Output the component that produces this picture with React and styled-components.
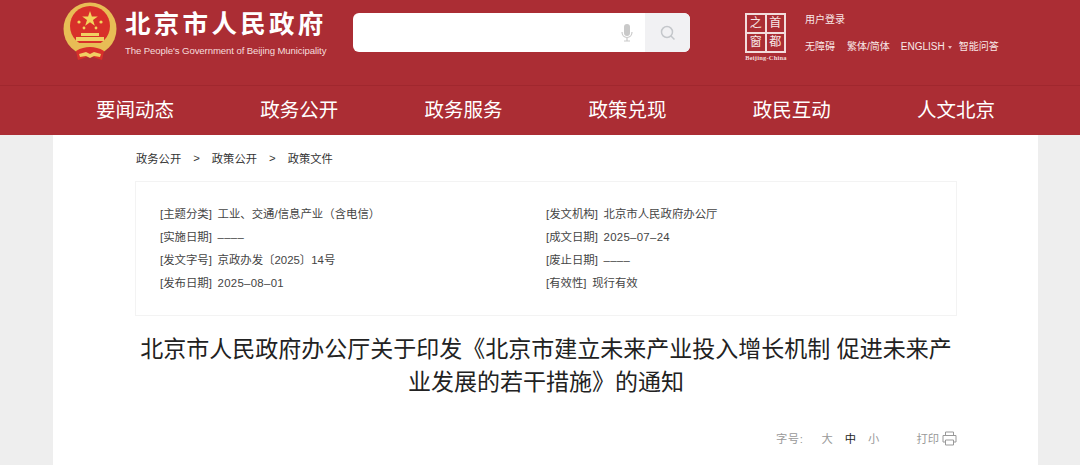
import React from "react"
import styled, { createGlobalStyle } from "styled-components"

const Global = createGlobalStyle`
    * { box-sizing: border-box; }
    html, body {
        margin: 0;
        height: 465px;
        overflow: hidden;
        background: #eeeeee;
        font-family: "Liberation Sans", "Noto Sans CJK SC", sans-serif;
    }
`

const Top = styled.header`
    height: 86px;
    background: #ab2d34;
    display: flex;
    align-items: flex-start;
    padding-left: 62px;
    border-bottom: 1px solid #a0272e;
`
const Emblem = styled.svg`
    width: 56px;
    height: 60px;
    margin-top: 2px;
    flex: none;
`
const Logo = styled.div`
    margin-left: 7px;
    width: 228px;
    flex: none;
    color: #fff;
`
const LogoTitle = styled.h1`
    margin: 9px 0 0;
    font-size: 25.5px;
    line-height: 30px;
    font-weight: 700;
    letter-spacing: 3.3px;
    white-space: nowrap;
`
const LogoSub = styled.div`
    margin-top: 5px;
    font-size: 9.6px;
    line-height: 14px;
    letter-spacing: -0.1px;
    white-space: nowrap;
    color: #f6dcdc;
`
const Search = styled.div`
    margin-top: 13px;
    width: 337px;
    height: 39px;
    flex: none;
    display: flex;
    background: #fff;
    border-radius: 6px;
    overflow: hidden;
`
const SearchInput = styled.div`
    flex: 1;
    display: flex;
    align-items: center;
    justify-content: flex-end;
    padding-right: 12px;
`
const SearchButton = styled.div`
    width: 45px;
    background: #f1f1f3;
    display: flex;
    align-items: center;
    justify-content: center;
`
const Stamp = styled.div`
    margin-left: 54px;
    margin-top: 13px;
    width: 44px;
    flex: none;
    color: #fff;
`
const StampBox = styled.div`
    width: 41px;
    height: 40px;
    margin-left: 1px;
    border: 2px solid #f3dcdc;
    display: grid;
    grid-template-columns: 1fr 1fr;
    grid-template-rows: 1fr 1fr;
    gap: 2px;
    background: #f3dcdc;
`
const StampCell = styled.span`
    background: #ab2d34;
    font-family: "Liberation Serif", "Noto Sans CJK SC", serif;
    font-size: 12px;
    line-height: 17px;
    text-align: center;
    color: #f7e6e6;
`
const StampCaption = styled.div`
    margin-top: 1px;
    font-family: "Liberation Serif", serif;
    font-size: 6.5px;
    line-height: 7px;
    font-weight: 700;
    letter-spacing: 0.2px;
    white-space: nowrap;
    text-align: center;
    color: #f3dcdc;
`
const Links = styled.div`
    margin-left: 17px;
    color: #f9e8e8;
    font-size: 10px;
    line-height: 14px;
`
const Login = styled.div`
    margin-top: 13px;
`
const LinkRow = styled.div`
    margin-top: 13px;
    display: flex;
    gap: 12px;
    white-space: nowrap;
`
const English = styled.span`
    margin-left: -1px;
    margin-right: -5px;
    &::after {
        content: "";
        display: inline-block;
        margin-left: 3px;
        vertical-align: 1px;
        border: 2.5px solid transparent;
        border-top: 3px solid #e9b9bb;
        border-bottom: 0;
    }
`
const Nav = styled.nav`
    height: 49px;
    background: #ab2d34;
    display: flex;
    padding-left: 96px;
    gap: 86.2px;
    align-items: center;
`
const NavItem = styled.a`
    width: 78px;
    color: #fff;
    font-size: 19.5px;
    line-height: 49px;
    white-space: nowrap;
`
const Page = styled.main`
    margin-left: 53px;
    width: 985px;
    height: 330px;
    background: #fff;
    padding: 0 81px 0 82px;
`
const Crumbs = styled.div`
    height: 46px;
    display: flex;
    align-items: center;
    padding-left: 1px;
    font-size: 11.3px;
    color: #333;
    white-space: nowrap;
`
const Sep = styled.span`
    margin: 0 12px;
`
const Meta = styled.section`
    height: 135px;
    border: 1px solid #f3f3f3;
    padding: 21px 24px 0;
    display: grid;
    grid-template-columns: 386px 1fr;
    grid-auto-rows: 23px;
    font-size: 11.4px;
    line-height: 23px;
    word-spacing: 2.5px;
    color: #444;
    white-space: nowrap;
`
const MetaDate = styled.span`
    letter-spacing: 0.3px;
`
const Title = styled.h2`
    margin: 17px 0 0;
    font-size: 23px;
    line-height: 33px;
    font-weight: 400;
    text-align: center;
    color: #222;
`
const Tools = styled.div`
    margin-top: 31px;
    display: flex;
    align-items: center;
    justify-content: flex-end;
    font-size: 11.3px;
    color: #999;
`
const SizeLabel = styled.span`
    margin-right: 18px;
    letter-spacing: 0.6px;
`
const Size = styled.span`
    margin-right: 12px;
    color: ${p => (p.$active ? "#222" : "#999")};
`
const Print = styled.span`
    margin-left: 25px;
    margin-right: 3px;
`

const navItems = ["要闻动态", "政务公开", "政务服务", "政策兑现", "政民互动", "人文北京"]

const meta = [
    { label: "[主题分类] 工业、交通/信息产业（含电信）" },
    { label: "[发文机构] 北京市人民政府办公厅" },
    { label: "[实施日期] ", date: "––––" },
    { label: "[成文日期] ", date: "2025–07–24" },
    { label: "[发文字号] 京政办发〔2025〕14号" },
    { label: "[废止日期] ", date: "––––" },
    { label: "[发布日期] ", date: "2025–08–01" },
    { label: "[有效性] 现行有效" },
]

export default function App() {
    return (
        <>
            <Global />
            <Top>
                <Emblem viewBox="0 0 56 60">
                    <circle cx="28" cy="27" r="26.5" fill="#e8bd55" />
                    <circle cx="28" cy="24" r="20" fill="#d8302a" />
                    <path d="M28 9l1.900 5.600h5.900l-4.800 3.500 1.800 5.600-4.800-3.500-4.800 3.500 1.800-5.600-4.800-3.500h5.900z" fill="#f3d45c" />
                    <circle cx="17" cy="20" r="1.6" fill="#f3d45c" />
                    <circle cx="39" cy="20" r="1.6" fill="#f3d45c" />
                    <circle cx="22" cy="26" r="1.4" fill="#f3d45c" />
                    <circle cx="34" cy="26" r="1.4" fill="#f3d45c" />
                    <rect x="19" y="31" width="18" height="3" fill="#f0cf63" />
                    <rect x="14" y="35" width="28" height="4" fill="#f0cf63" />
                    <rect x="12" y="41" width="32" height="3" fill="#e8bd55" />
                    <path d="M14 49c5-3 9-4 14-4s9 1 14 4l-2 9-9-3h-6l-9 3z" fill="#d8302a" />
                    <path d="M17 52l7-2 4 2 4-2 7 2-1 3-6-1-4 2-4-2-6 1z" fill="#f0cf63" />
                </Emblem>
                <Logo>
                    <LogoTitle>北京市人民政府</LogoTitle>
                    <LogoSub>The People's Government of Beijing Municipality</LogoSub>
                </Logo>
                <Search>
                    <SearchInput>
                        <svg width="12" height="18" viewBox="0 0 12 18">
                            <rect x="3" y="0" width="6" height="12" rx="3" fill="#c9c9c9" />
                            <path d="M1 8c0 3 2 5.500 5 5.500s5-2.500 5-5.500M6 13.500V17M3 17h6" fill="none" stroke="#c9c9c9" strokeWidth="1.2" />
                        </svg>
                    </SearchInput>
                    <SearchButton>
                        <svg width="16" height="16" viewBox="0 0 16 16">
                            <circle cx="7" cy="7" r="5.500" fill="none" stroke="#c4c7cb" strokeWidth="1.5" />
                            <path d="M11 11l3.500 3.500" stroke="#c4c7cb" strokeWidth="1.5" />
                        </svg>
                    </SearchButton>
                </Search>
                <Stamp>
                    <StampBox>
                        <StampCell>之</StampCell>
                        <StampCell>首</StampCell>
                        <StampCell>窗</StampCell>
                        <StampCell>都</StampCell>
                    </StampBox>
                    <StampCaption>Beijing-China</StampCaption>
                </Stamp>
                <Links>
                    <Login>用户登录</Login>
                    <LinkRow>
                        <span>无障碍</span>
                        <span>繁体/简体</span>
                        <English>ENGLISH</English>
                        <span>智能问答</span>
                    </LinkRow>
                </Links>
            </Top>
            <Nav>
                {navItems.map(item => (
                    <NavItem key={item}>{item}</NavItem>
                ))}
            </Nav>
            <Page>
                <Crumbs>
                    政务公开<Sep>&gt;</Sep>政策公开<Sep>&gt;</Sep>政策文件
                </Crumbs>
                <Meta>
                    {meta.map(cell => (
                        <div key={cell.label}>
                            {cell.label}
                            {cell.date && <MetaDate>{cell.date}</MetaDate>}
                        </div>
                    ))}
                </Meta>
                <Title>北京市人民政府办公厅关于印发《北京市建立未来产业投入增长机制 促进未来产业发展的若干措施》的通知</Title>
                <Tools>
                    <SizeLabel>字号:</SizeLabel>
                    <Size>大</Size>
                    <Size $active>中</Size>
                    <Size>小</Size>
                    <Print>打印</Print>
                    <svg width="15" height="15" viewBox="0 0 15 15" fill="none" stroke="#999">
                        <path d="M3.500 4V1h8v3M3.500 11H1V4.500h13V11h-2.500M3.500 9h8v5h-8z" />
                    </svg>
                </Tools>
            </Page>
        </>
    )
}
